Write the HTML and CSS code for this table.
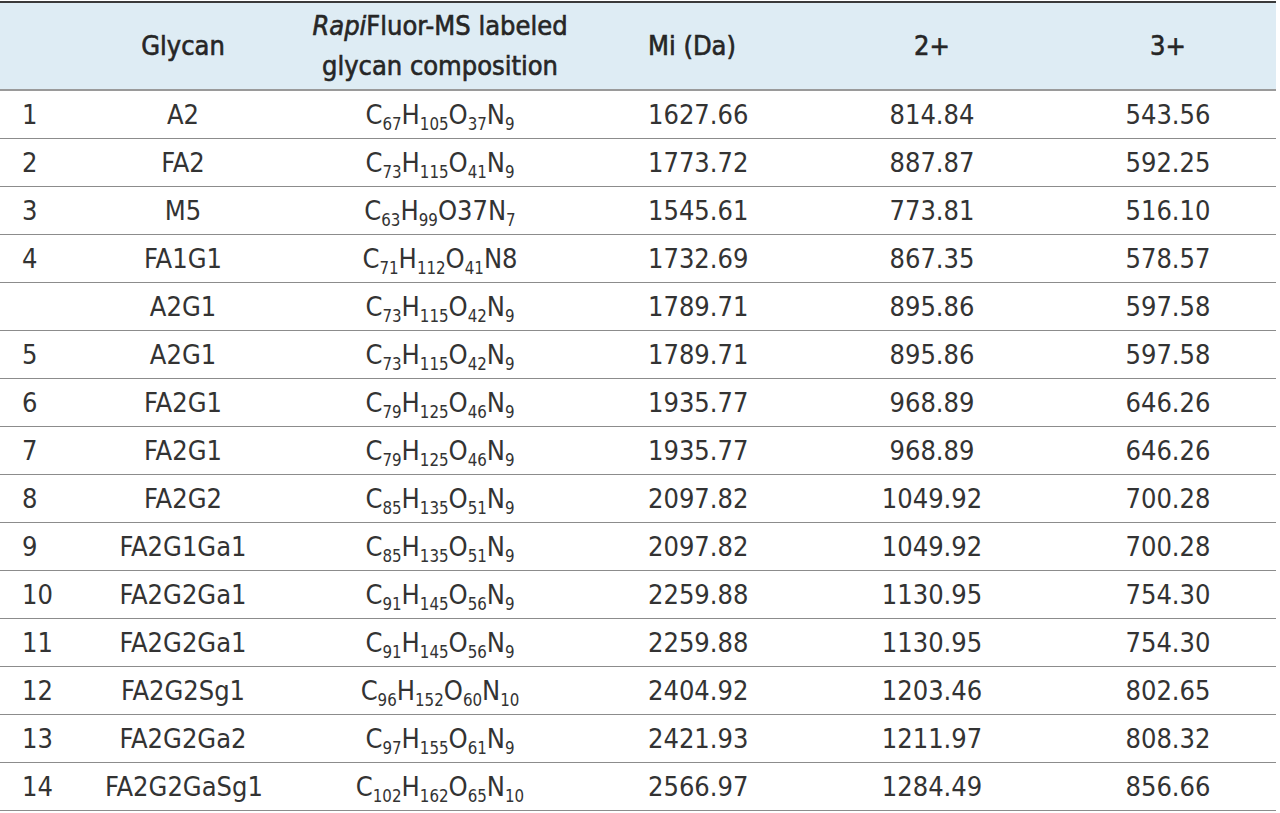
FILE: index.html
```html
<!DOCTYPE html>
<html>
<head>
<meta charset="utf-8">
<link rel="stylesheet" href="styles.css">
</head>
<body>
<table class="glycans">
  <colgroup>
    <col class="c-num"><col class="c-gly"><col class="c-comp"><col class="c-mi"><col class="c-two"><col class="c-three">
  </colgroup>
  <thead>
    <tr>
      <th class="num"></th>
      <th class="ctr">Glycan</th>
      <th class="ctr"><i>Rapi</i>Fluor-MS labeled<br>glycan composition</th>
      <th class="mi">Mi (Da)</th>
      <th class="ctr">2+</th>
      <th class="ctr">3+</th>
    </tr>
  </thead>
  <tbody>
    <tr><td class="num">1</td><td class="ctr">A2</td><td class="ctr">C<sub>67</sub>H<sub>105</sub>O<sub>37</sub>N<sub>9</sub></td><td class="mi">1627.66</td><td class="ctr">814.84</td><td class="ctr">543.56</td></tr>
    <tr><td class="num">2</td><td class="ctr">FA2</td><td class="ctr">C<sub>73</sub>H<sub>115</sub>O<sub>41</sub>N<sub>9</sub></td><td class="mi">1773.72</td><td class="ctr">887.87</td><td class="ctr">592.25</td></tr>
    <tr><td class="num">3</td><td class="ctr">M5</td><td class="ctr">C<sub>63</sub>H<sub>99</sub>O37N<sub>7</sub></td><td class="mi">1545.61</td><td class="ctr">773.81</td><td class="ctr">516.10</td></tr>
    <tr><td class="num">4</td><td class="ctr">FA1G1</td><td class="ctr">C<sub>71</sub>H<sub>112</sub>O<sub>41</sub>N8</td><td class="mi">1732.69</td><td class="ctr">867.35</td><td class="ctr">578.57</td></tr>
    <tr><td class="num"></td><td class="ctr">A2G1</td><td class="ctr">C<sub>73</sub>H<sub>115</sub>O<sub>42</sub>N<sub>9</sub></td><td class="mi">1789.71</td><td class="ctr">895.86</td><td class="ctr">597.58</td></tr>
    <tr><td class="num">5</td><td class="ctr">A2G1</td><td class="ctr">C<sub>73</sub>H<sub>115</sub>O<sub>42</sub>N<sub>9</sub></td><td class="mi">1789.71</td><td class="ctr">895.86</td><td class="ctr">597.58</td></tr>
    <tr><td class="num">6</td><td class="ctr">FA2G1</td><td class="ctr">C<sub>79</sub>H<sub>125</sub>O<sub>46</sub>N<sub>9</sub></td><td class="mi">1935.77</td><td class="ctr">968.89</td><td class="ctr">646.26</td></tr>
    <tr><td class="num">7</td><td class="ctr">FA2G1</td><td class="ctr">C<sub>79</sub>H<sub>125</sub>O<sub>46</sub>N<sub>9</sub></td><td class="mi">1935.77</td><td class="ctr">968.89</td><td class="ctr">646.26</td></tr>
    <tr><td class="num">8</td><td class="ctr">FA2G2</td><td class="ctr">C<sub>85</sub>H<sub>135</sub>O<sub>51</sub>N<sub>9</sub></td><td class="mi">2097.82</td><td class="ctr">1049.92</td><td class="ctr">700.28</td></tr>
    <tr><td class="num">9</td><td class="ctr">FA2G1Ga1</td><td class="ctr">C<sub>85</sub>H<sub>135</sub>O<sub>51</sub>N<sub>9</sub></td><td class="mi">2097.82</td><td class="ctr">1049.92</td><td class="ctr">700.28</td></tr>
    <tr><td class="num">10</td><td class="ctr">FA2G2Ga1</td><td class="ctr">C<sub>91</sub>H<sub>145</sub>O<sub>56</sub>N<sub>9</sub></td><td class="mi">2259.88</td><td class="ctr">1130.95</td><td class="ctr">754.30</td></tr>
    <tr><td class="num">11</td><td class="ctr">FA2G2Ga1</td><td class="ctr">C<sub>91</sub>H<sub>145</sub>O<sub>56</sub>N<sub>9</sub></td><td class="mi">2259.88</td><td class="ctr">1130.95</td><td class="ctr">754.30</td></tr>
    <tr><td class="num">12</td><td class="ctr">FA2G2Sg1</td><td class="ctr">C<sub>96</sub>H<sub>152</sub>O<sub>60</sub>N<sub>10</sub></td><td class="mi">2404.92</td><td class="ctr">1203.46</td><td class="ctr">802.65</td></tr>
    <tr><td class="num">13</td><td class="ctr">FA2G2Ga2</td><td class="ctr">C<sub>97</sub>H<sub>155</sub>O<sub>61</sub>N<sub>9</sub></td><td class="mi">2421.93</td><td class="ctr">1211.97</td><td class="ctr">808.32</td></tr>
    <tr><td class="num">14</td><td class="ctr">FA2G2GaSg1</td><td class="ctr">C<sub>102</sub>H<sub>162</sub>O<sub>65</sub>N<sub>10</sub></td><td class="mi">2566.97</td><td class="ctr">1284.49</td><td class="ctr">856.66</td></tr>
  </tbody>
</table>
</body>
</html>
```

FILE: styles.css
```css
html, body {
  margin: 0;
  padding: 0;
  background: #ffffff;
}

body {
  padding-top: 1px;
  font-family: "DejaVu Sans Condensed", "DejaVu Sans", sans-serif;
  font-stretch: condensed;
  color: #2e2e2e;
}

.glycans {
  width: 1276px;
  border-collapse: collapse;
  table-layout: fixed;
  font-size: 27px;
}

.c-num { width: 105px; }
.c-gly { width: 156px; }
.c-comp { width: 358px; }
.c-mi { width: 185px; }
.c-two { width: 256px; }
.c-three { width: 216px; }

.glycans thead tr {
  background: #deecf4;
  border-top: 2px solid #3a3a3a;
  border-bottom: 2px solid #9a9a9a;
}

.glycans th {
  height: 86px;
  padding: 0;
  font-weight: normal;
  -webkit-text-stroke: 0.6px #262626;
  line-height: 40px;
  vertical-align: middle;
  color: #262626;
}

.glycans td {
  height: 47px;
  padding: 0;
  line-height: 30px;
  vertical-align: middle;
  color: #333333;
  white-space: nowrap;
}

.glycans tbody tr {
  border-bottom: 1px solid #8c8c8c;
}

.num {
  text-align: left;
  padding-left: 22px !important;
}

.ctr {
  text-align: center;
}

.mi {
  text-align: left;
  padding-left: 29px !important;
}

sub {
  font-size: 0.62em;
  vertical-align: -0.36em;
  line-height: 0;
}
```
